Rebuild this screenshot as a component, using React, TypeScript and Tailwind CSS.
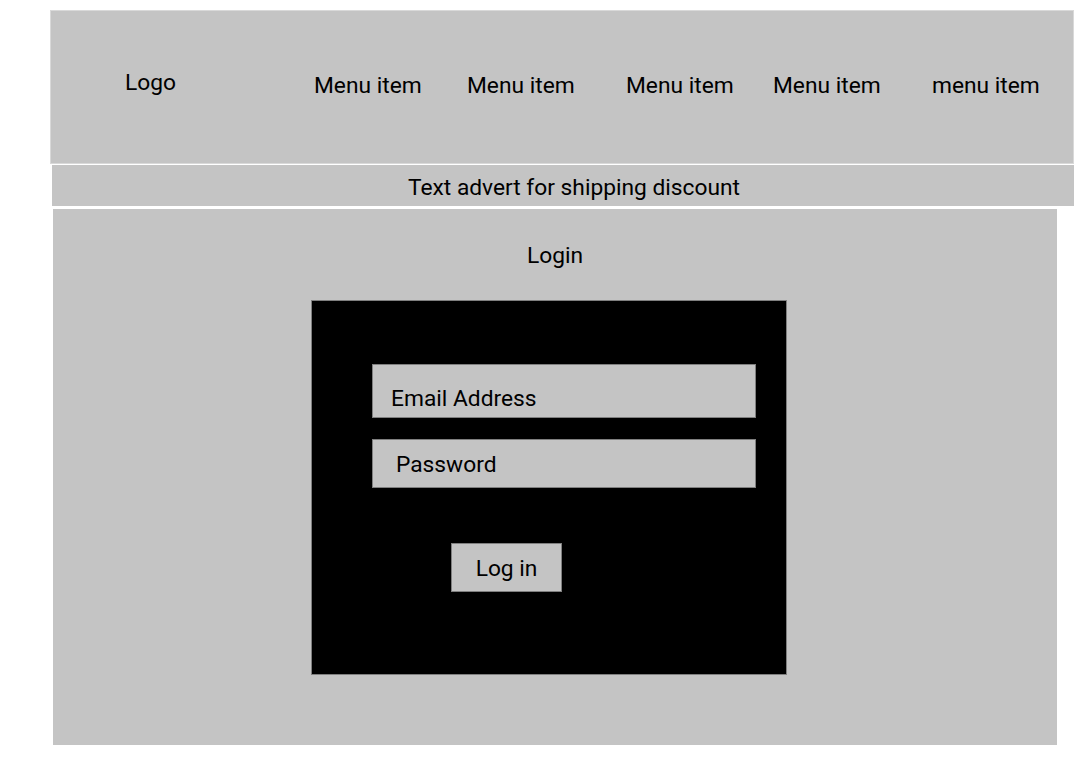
export default function App() {
  const menu = [
    { label: "Menu item", cls: "ml-[139px]" },
    { label: "Menu item", cls: "ml-[46px]" },
    { label: "Menu item", cls: "ml-[52px]" },
    { label: "Menu item", cls: "ml-[40px]" },
    { label: "menu item", cls: "ml-[52px]" },
  ];

  return (
    <div className="min-h-[772px] w-[1089px] bg-white pt-[10px] text-[22.75px] text-black font-['Roboto',sans-serif]">
      {/* Header */}
      <header className="ml-[50px] flex h-[154px] w-[1024px] items-center border border-[#d9d9d9] bg-[#c4c4c4]">
        <span className="ml-[74px] -mt-[8px] w-[50px] whitespace-nowrap">Logo</span>
        {menu.map((m, i) => (
          <span key={i} className={`${m.cls} -mt-[2px] w-[107px] whitespace-nowrap`}>
            {m.label}
          </span>
        ))}
      </header>

      {/* Advert */}
      <div className="ml-[52px] mt-px flex h-[41px] w-[1022px] items-center justify-center bg-[#c4c4c4] pl-[22px] pt-[5px]">
        Text advert for shipping discount
      </div>

      {/* Login */}
      <main className="ml-[53px] mt-[3px] flex h-[536px] w-[1004px] flex-col items-center bg-[#c4c4c4]">
        <h1 className="mt-[33px] leading-[28px]">Login</h1>
        <div className="mt-[30px] ml-[258px] flex h-[375px] w-[476px] flex-col self-start border border-[#7f7f7f] bg-black pt-[63px] pl-[60px]">
          <div className="flex h-[54px] w-[384px] items-center border border-[#7f7f7f] bg-[#c4c4c4] pl-[18px] pt-[16px]">
            Email Address
          </div>
          <div className="mt-[21px] flex h-[49px] w-[384px] items-center border border-[#7f7f7f] bg-[#c4c4c4] pl-[23px] pt-[4px]">
            Password
          </div>
          <button className="ml-[79px] mt-[55px] flex h-[49px] w-[111px] items-center justify-center border border-[#7f7f7f] bg-[#c4c4c4] pt-[4px]">
            Log in
          </button>
        </div>
      </main>
    </div>
  );
}
